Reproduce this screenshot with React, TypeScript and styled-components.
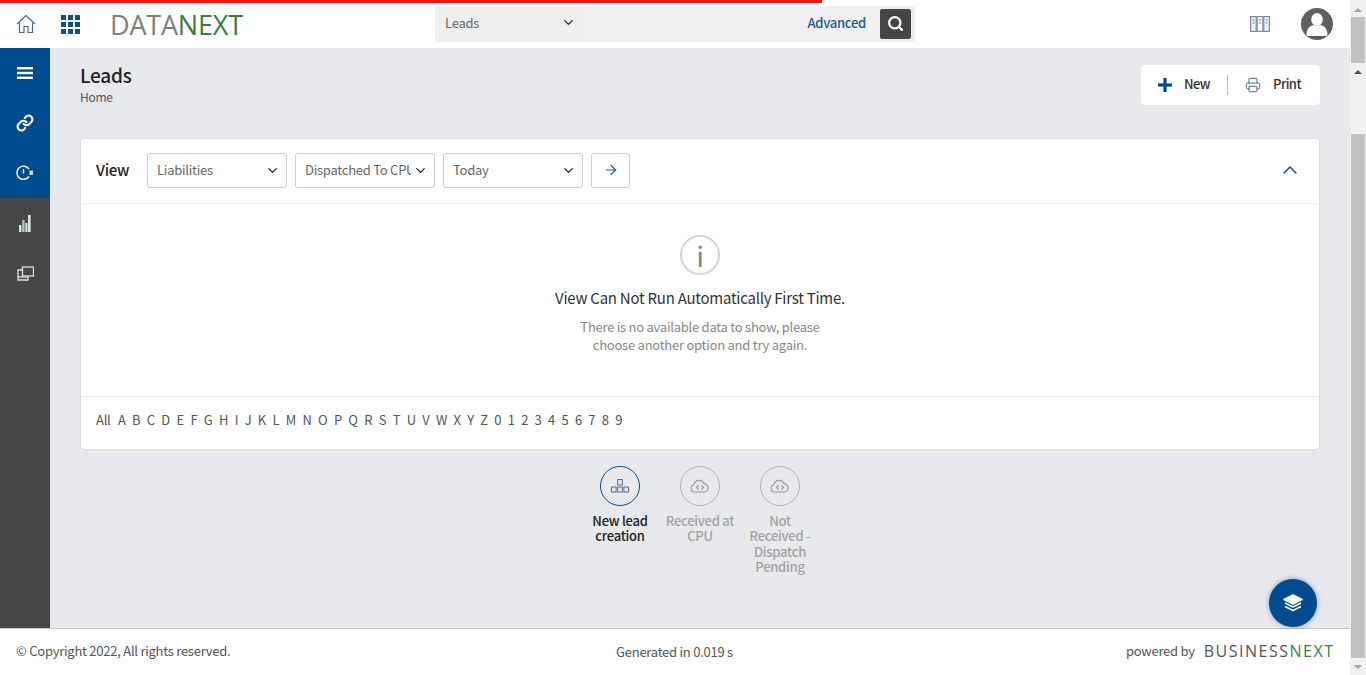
import React from "react"
import styled, { createGlobalStyle } from "styled-components"
import { ArrowRight, ChevronDown, ChevronUp, Link as LinkGlyph, Printer, Search } from "lucide-react"

const Global = createGlobalStyle`
  html, body {
    margin: 0;
    padding: 0;
    height: 100%;
    overflow: hidden;
    background: #e8e9ed;
    font-family: "Noto Sans CJK KR", "Noto Sans", sans-serif;
    font-size: 13px;
    letter-spacing: -0.25px;
    color: #333;
  }
  * {
    box-sizing: border-box;
  }
`

const Page = styled.div`
  display: flex;
  width: 1366px;
  height: 675px;
  position: relative;
`
const LoadBar = styled.div`
  position: absolute;
  left: 0;
  top: 0;
  width: 822px;
  height: 3px;
  background: #f51408;
  z-index: 5;
`
const Main = styled.div`
  width: 1350px;
  display: flex;
  flex-direction: column;
`
const Header = styled.header`
  height: 48px;
  flex: none;
  background: #fff;
  display: flex;
  align-items: center;
  position: relative;
  padding-left: 16px;
`
const IconLink = styled.a`
  display: flex;
  width: 20px;
  margin-right: 25px;
`
const Logo = styled.div`
  margin-left: 4px;
  width: 325px;
  font-family: "Open Sans", sans-serif;
  font-size: 27px;
  line-height: 48px;
  letter-spacing: -0.2px;
  padding-top: 1px;
  color: #7f7f7f;
  span {
    color: #3c7d45;
  }
`
const SearchBox = styled.div`
  width: 480px;
  height: 36px;
  margin-top: -1px;
  background: #f0f0f0;
  border-radius: 3px;
  display: flex;
  align-items: center;
  padding-right: 4px;
`
const SearchSelect = styled.div`
  width: 148px;
  height: 36px;
  background: #efefef;
  padding: 0 7px 2px 10px;
  display: flex;
  align-items: center;
  justify-content: space-between;
  color: #666;
`
const Advanced = styled.a`
  margin-left: auto;
  margin-right: 14px;
  padding-bottom: 2px;
  color: #1b5a94;
  font-weight: 500;
`
const SearchButton = styled.button`
  width: 31px;
  height: 30px;
  border: 0;
  padding: 0;
  border-radius: 2px;
  background: #464649;
  color: #fff;
  display: flex;
  align-items: center;
  justify-content: center;
`
const HeaderRight = styled.div`
  margin-left: auto;
  display: flex;
  align-items: center;
  gap: 31px;
  padding-right: 17px;
`
const Avatar = styled.div`
  width: 32px;
  height: 32px;
  border-radius: 50%;
  overflow: hidden;
  background: #5f5f5f;
`
const Body = styled.div`
  flex: 1;
  display: flex;
  min-height: 0;
  position: relative;
`
const Sidebar = styled.nav`
  width: 50px;
  flex: none;
  background: #464649;
`
const SideItem = styled.a<{ $blue?: boolean }>`
  height: 50px;
  display: flex;
  align-items: center;
  justify-content: center;
  background: ${p => (p.$blue ? "#004b8f" : "transparent")};
  color: #fff;
`
const Content = styled.main`
  flex: 1;
  padding: 0 30px;
  min-width: 0;
`
const TitleRow = styled.div`
  display: flex;
  justify-content: space-between;
  height: 90px;
  padding-top: 15px;
`
const Title = styled.h1`
  margin: 0;
  font-size: 19px;
  line-height: 24px;
  font-weight: 500;
  color: #222;
`
const Crumb = styled.div`
  margin-top: 1px;
  font-size: 12px;
  line-height: 18px;
  color: #555;
`
const ToolBar = styled.div`
  width: 179px;
  height: 40px;
  margin-top: 2px;
  background: #fff;
  border-radius: 4px;
  display: flex;
  align-items: center;
  padding-left: 17px;
`
const ToolLabel = styled.span`
  font-weight: 500;
  letter-spacing: -0.55px;
  color: #333;
  margin-left: 12px;
  position: relative;
  top: -2px;
`
const ToolDivider = styled.span`
  width: 1px;
  height: 20px;
  background: #bbb;
  margin: 0 17px;
`
const Card = styled.section`
  height: 312px;
  background: #fff;
  border: 1px solid #dcdde0;
  border-radius: 3px;
`
const CardHead = styled.div`
  height: 65px;
  display: flex;
  align-items: center;
  padding: 0 17px 2px 15px;
  border-bottom: 1px solid #f3f3f3;
`
const ViewLabel = styled.span`
  width: 51px;
  flex: none;
  padding-bottom: 1px;
  font-size: 15px;
  font-weight: 500;
  color: #222;
`
const SelectBox = styled.div`
  width: 140px;
  height: 35px;
  border: 1px solid #ccc;
  border-radius: 3px;
  margin-right: 8px;
  padding: 0 0 1px 9px;
  display: flex;
  align-items: center;
  position: relative;
  color: #666;
  svg {
    position: absolute;
    right: 6px;
    top: 9px;
    color: #222;
  }
`
const SelectText = styled.span`
  width: 106px;
  overflow: hidden;
  white-space: nowrap;
`
const GoButton = styled.button`
  width: 39px;
  height: 35px;
  border: 1px solid #ccc;
  border-radius: 3px;
  background: #fff;
  padding: 0;
  display: flex;
  align-items: center;
  justify-content: center;
  color: #1b5a94;
`
const Collapse = styled.a`
  margin-left: auto;
  display: flex;
  color: #1b4f80;
`
const Empty = styled.div`
  height: 192px;
  display: flex;
  flex-direction: column;
  align-items: center;
  padding-top: 31px;
`
const InfoCircle = styled.div`
  width: 40px;
  height: 40px;
  border: 2px solid #d6d6d6;
  border-radius: 50%;
  display: flex;
  align-items: center;
  justify-content: center;
  color: #808080;
  font-size: 27px;
  line-height: 1;
  font-weight: 400;
`
const EmptyTitle = styled.div`
  margin-top: 12px;
  font-size: 15px;
  line-height: 22px;
  color: #333;
`
const EmptyText = styled.div`
  margin-top: 9px;
  line-height: 18px;
  color: #888;
  text-align: center;
`
const Alpha = styled.div`
  height: 53px;
  border-top: 1px solid #eee;
  display: flex;
  align-items: center;
  padding: 0 15px 7px;
  gap: 6.46px;
  color: #555;
`
const AlphaAll = styled.span`
  margin-right: 1px;
`
const Steps = styled.div`
  display: flex;
  justify-content: center;
  margin-top: 16px;
`
const Step = styled.div<{ $active?: boolean }>`
  width: 80px;
  padding: 0 5px;
  display: flex;
  flex-direction: column;
  align-items: center;
  text-align: center;
  line-height: 15.4px;
  font-weight: 500;
  color: ${p => (p.$active ? "#222" : "#a2a2a2")};
`
const StepCircle = styled.div<{ $active?: boolean }>`
  width: 40px;
  height: 40px;
  border-radius: 50%;
  border: 1px solid ${p => (p.$active ? "#004b8f" : "#b3b3b3")};
  display: flex;
  align-items: center;
  justify-content: center;
  margin-bottom: 7px;
  color: ${p => (p.$active ? "#5a6f85" : "#999")};
`
const Fab = styled.button`
  position: absolute;
  right: 33px;
  bottom: 1px;
  width: 48px;
  height: 48px;
  border: 0;
  padding: 0;
  border-radius: 50%;
  background: #004b8f;
  color: #fff;
  display: flex;
  align-items: center;
  justify-content: center;
  box-shadow: 0 0 5px rgba(0, 75, 143, 0.5);
`
const Footer = styled.footer`
  height: 47px;
  flex: none;
  background: #fff;
  border-top: 1px solid #c8c8c8;
  display: grid;
  grid-template-columns: 1fr auto 1fr;
  align-items: center;
  padding: 0 17px 3px 16px;
  color: #555;
`
const Generated = styled.span`
  position: relative;
  top: 1px;
`
const Powered = styled.div`
  justify-self: end;
  display: flex;
  align-items: center;
  gap: 9px;
`
const BrandName = styled.span`
  font-family: "Open Sans", sans-serif;
  font-size: 16px;
  letter-spacing: 1.5px;
  margin-right: -1.5px;
  color: #555;
  span {
    color: #3c7d45;
  }
`
const Scroll = styled.div`
  width: 16px;
  height: 675px;
  flex: none;
  background: #f1f1f1;
  padding: 0 1px;
  display: flex;
  flex-direction: column;
`
const Arrow = styled.div<{ $dir: "up" | "down"; $dim?: boolean; $top: number }>`
  width: 0;
  height: 0;
  margin: ${p => p.$top}px auto 0;
  border-left: 4px solid transparent;
  border-right: 4px solid transparent;
  ${p => (p.$dir === "up" ? "border-bottom" : "border-top")}: 4px solid ${p => (p.$dim ? "#a3a3a3" : "#505050")};
`
const Thumb = styled.div<{ $h: number; $top: number }>`
  height: ${p => p.$h}px;
  margin-top: ${p => p.$top}px;
  background: #c1c1c1;
  flex: none;
`

const letters = "ABCDEFGHIJKLMNOPQRSTUVWXYZ0123456789".split("")

const HomeIcon = () => (
  <svg width="20" height="20" viewBox="0 0 20 20" fill="none" stroke="#4a6b8c" strokeWidth="1.2">
    <path d="M1 10 10 1.5 19 10" />
    <path d="M3.5 8.5V18.5H8V12.5H12V18.5H16.5V8.5" />
  </svg>
)
const GridIcon = () => (
  <svg width="19" height="19" viewBox="0 0 19 19" fill="#0f4d8c">
    <rect x="0" y="0" width="5" height="5" />
    <rect x="7" y="0" width="5" height="5" />
    <rect x="14" y="0" width="5" height="5" />
    <rect x="0" y="7" width="5" height="5" />
    <rect x="7" y="7" width="5" height="5" />
    <rect x="14" y="7" width="5" height="5" />
    <rect x="0" y="14" width="5" height="5" />
    <rect x="7" y="14" width="5" height="5" />
    <rect x="14" y="14" width="5" height="5" />
  </svg>
)
const MenuIcon = () => (
  <svg width="16" height="12" viewBox="0 0 16 12" fill="#fff">
    <rect width="16" height="2.4" y="0" />
    <rect width="16" height="2.4" y="4.8" />
    <rect width="16" height="2.4" y="9.6" />
  </svg>
)
const ClockIcon = () => (
  <svg width="18" height="16" viewBox="0 0 18 16" fill="none" stroke="#fff" strokeWidth="1.4">
    <path d="M13 11.5A6.6 6.6 0 1 1 13 4" />
    <path d="M7.5 4v4.5" />
    <rect x="13.4" y="5.5" width="3.6" height="4.5" fill="#c9d8e8" stroke="none" />
  </svg>
)
const BarsIcon = () => (
  <svg width="12" height="17" viewBox="0 0 12 17" fill="#dfe6e6">
    <rect x="0" y="10" width="2.4" height="7" />
    <rect x="3.2" y="5" width="2.4" height="12" fill="#a8c8b0" />
    <rect x="6.4" y="8" width="2" height="9" />
    <rect x="9" y="0" width="2.6" height="17" />
  </svg>
)
const WindowsIcon = () => (
  <svg width="17" height="15" viewBox="0 0 17 15" fill="none" stroke="#e2e2e2" strokeWidth="1.3">
    <rect x="5.5" y="1" width="11" height="9" />
    <path d="M6 4H1V14H11V10" />
    <path d="M1 11H11" />
  </svg>
)
const BooksIcon = () => (
  <svg width="20" height="16" viewBox="0 0 20 16" fill="none" stroke="#6d84a8" strokeWidth="1.1">
    <rect x="0.6" y="0.6" width="5.6" height="14.8" fill="#e9eef5" />
    <rect x="7.2" y="0.6" width="5.6" height="14.8" stroke="#8a78a5" />
    <rect x="13.8" y="0.6" width="5.6" height="14.8" fill="#eef3f8" />
    <path d="M2.5 4h2M9 4h2M15.7 4h2M2.5 7h2M9 7h2M15.7 7h2" />
  </svg>
)
const UserIcon = () => (
  <svg width="32" height="32" viewBox="0 0 32 32" fill="#fff">
    <ellipse cx="16" cy="11.5" rx="5.8" ry="6.4" />
    <path d="M5.5 26.5c0-6 3.5-8.8 7-9.6 2 1.4 5 1.4 7 0 3.5.8 7 3.6 7 9.6 0 1-1 1.5-2 1.5H7.5c-1 0-2-.5-2-1.5z" />
  </svg>
)
const PlusIcon = () => (
  <svg width="14" height="14" viewBox="0 0 14 14" fill="#004b8f">
    <rect x="5.4" y="0" width="3.2" height="14" />
    <rect x="0" y="5.4" width="14" height="3.2" />
  </svg>
)
const NetworkIcon = () => (
  <svg width="18" height="14" viewBox="0 0 18 14" fill="none" stroke="currentColor" strokeWidth="1">
    <rect x="6.7" y="0.5" width="4.6" height="5.5" />
    <rect x="0.5" y="8" width="4.6" height="5" />
    <rect x="6.7" y="8" width="4.6" height="5" />
    <rect x="12.9" y="8" width="4.6" height="5" />
  </svg>
)
const CloudIcon = () => (
  <svg width="20" height="14" viewBox="0 0 20 14" fill="none" stroke="currentColor" strokeWidth="1.1">
    <path d="M5 13H4.5a3.7 3.7 0 0 1-.6-7.3A5.3 5.3 0 0 1 14 4.6 4.3 4.3 0 0 1 15 13z" />
    <path d="M8.5 6.5 6.5 8.5l2 2M11.5 6.5l2 2-2 2" />
  </svg>
)
const StackIcon = () => (
  <svg width="20" height="18" viewBox="0 0 20 18" fill="none" stroke="#fff" strokeWidth="1.5" strokeLinejoin="round">
    <path d="M10 1 19 5.5 10 10 1 5.5z" fill="#fff" />
    <path d="M2 9 10 13 18 9" />
    <path d="M2 12.5 10 16.5 18 12.5" />
  </svg>
)

export default function App() {
  return (
    <>
      <Global />
      <Page>
        <LoadBar />
        <Main>
          <Header>
            <IconLink>
              <HomeIcon />
            </IconLink>
            <IconLink>
              <GridIcon />
            </IconLink>
            <Logo>
              DATA<span>NEXT</span>
            </Logo>
            <SearchBox>
              <SearchSelect>
                Leads
                <ChevronDown size={15} color="#222" strokeWidth={2} />
              </SearchSelect>
              <Advanced>Advanced</Advanced>
              <SearchButton>
                <Search size={17} strokeWidth={3.2} />
              </SearchButton>
            </SearchBox>
            <HeaderRight>
              <BooksIcon />
              <Avatar>
                <UserIcon />
              </Avatar>
            </HeaderRight>
          </Header>
          <Body>
            <Sidebar>
              <SideItem $blue>
                <MenuIcon />
              </SideItem>
              <SideItem $blue>
                <LinkGlyph size={18} strokeWidth={2.8} />
              </SideItem>
              <SideItem $blue>
                <ClockIcon />
              </SideItem>
              <SideItem>
                <BarsIcon />
              </SideItem>
              <SideItem>
                <WindowsIcon />
              </SideItem>
            </Sidebar>
            <Content>
              <TitleRow>
                <div>
                  <Title>Leads</Title>
                  <Crumb>Home</Crumb>
                </div>
                <ToolBar>
                  <PlusIcon />
                  <ToolLabel>New</ToolLabel>
                  <ToolDivider />
                  <Printer size={16} color="#1f5a94" strokeWidth={1.3} />
                  <ToolLabel>Print</ToolLabel>
                </ToolBar>
              </TitleRow>
              <Card>
                <CardHead>
                  <ViewLabel>View</ViewLabel>
                  <SelectBox>
                    <SelectText>Liabilities</SelectText>
                    <ChevronDown size={15} strokeWidth={2} />
                  </SelectBox>
                  <SelectBox>
                    <SelectText>Dispatched To CPU</SelectText>
                    <ChevronDown size={15} strokeWidth={2} />
                  </SelectBox>
                  <SelectBox>
                    <SelectText>Today</SelectText>
                    <ChevronDown size={15} strokeWidth={2} />
                  </SelectBox>
                  <GoButton>
                    <ArrowRight size={16} strokeWidth={1.8} />
                  </GoButton>
                  <Collapse>
                    <ChevronUp size={24} strokeWidth={1.5} />
                  </Collapse>
                </CardHead>
                <Empty>
                  <InfoCircle>i</InfoCircle>
                  <EmptyTitle>View Can Not Run Automatically First Time.</EmptyTitle>
                  <EmptyText>
                    There is no available data to show, please
                    <br />
                    choose another option and try again.
                  </EmptyText>
                </Empty>
                <Alpha>
                  <AlphaAll>All</AlphaAll>
                  {letters.map(l => (
                    <span key={l}>{l}</span>
                  ))}
                </Alpha>
              </Card>
              <Steps>
                <Step $active>
                  <StepCircle $active>
                    <NetworkIcon />
                  </StepCircle>
                  New lead creation
                </Step>
                <Step>
                  <StepCircle>
                    <CloudIcon />
                  </StepCircle>
                  Received at CPU
                </Step>
                <Step>
                  <StepCircle>
                    <CloudIcon />
                  </StepCircle>
                  Not Received - Dispatch Pending
                </Step>
              </Steps>
            </Content>
            <Fab>
              <StackIcon />
            </Fab>
          </Body>
          <Footer>
            <span>© Copyright 2022, All rights reserved.</span>
            <Generated>Generated in 0.019 s</Generated>
            <Powered>
              powered by
              <BrandName>
                BUSINESS<span>NEXT</span>
              </BrandName>
            </Powered>
          </Footer>
        </Main>
        <Scroll>
          <Arrow $dir="up" $dim $top={8} />
          <Thumb $h={46} $top={5} />
          <Arrow $dir="up" $top={7} />
          <Thumb $h={524} $top={60} />
          <Arrow $dir="down" $dim $top={7} />
        </Scroll>
      </Page>
    </>
  )
}
